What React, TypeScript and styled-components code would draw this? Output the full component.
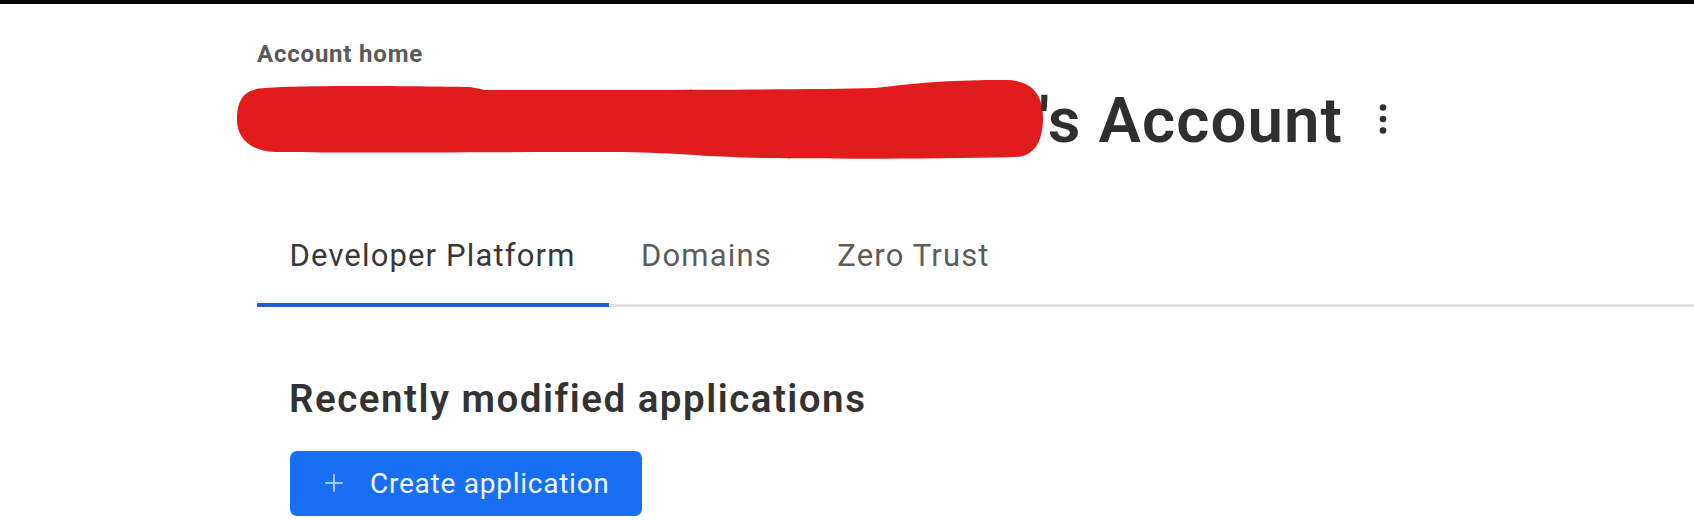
import React from "react";
import styled, { createGlobalStyle } from "styled-components";

const GlobalStyle = createGlobalStyle`
  html, body {
    margin: 0;
    padding: 0;
    background: #ffffff;
  }
  body {
    font-family: Roboto, "Liberation Sans", Arial, sans-serif;
    color: #333333;
  }
`;

const Page = styled.div`
  width: 1694px;
  min-height: 520px;
  overflow: hidden;
  background: #ffffff;
`;

const TopBar = styled.div`
  height: 4px;
  background: #040404;
`;

const Main = styled.main`
  padding-left: 257px;
  display: flex;
  flex-direction: column;
`;

const Breadcrumb = styled.a`
  margin-top: 36px;
  font-size: 24px;
  line-height: 28px;
  font-weight: 700;
  letter-spacing: 0.8px;
  color: #5a5a5a;
  text-decoration: none;
  align-self: flex-start;
`;

const TitleRow = styled.div`
  margin-top: 10px;
  display: flex;
  align-items: center;
  height: 82px;
`;

const Redaction = styled.svg`
  flex: none;
  margin-left: -22px;
  width: 810px;
  height: 82px;
  display: block;
`;

const Title = styled.h1`
  margin: 0;
  margin-left: -6px;
  align-self: flex-start;
  margin-top: 4.6px;
  font-size: 63.5px;
  line-height: 76px;
  font-weight: 600;
  letter-spacing: 1.1px;
  color: #2f2f2f;
  white-space: nowrap;
`;

const KebabButton = styled.button`
  margin-left: 35px;
  padding: 0;
  border: 0;
  background: none;
  display: flex;
  align-items: center;
  justify-content: center;
  width: 10px;
  height: 36px;
  cursor: pointer;
`;

const TabBar = styled.nav`
  margin-top: 78px;
  display: flex;
  border-bottom: 3px solid #e2e2e2;
`;

const Tab = styled.div<{ $active?: boolean }>`
  padding: 0 33px 28.6px 32.5px;
  margin-bottom: -3px;
  font-size: 31px;
  line-height: 36px;
  font-weight: 400;
  letter-spacing: 1.15px;
  color: ${(p) => (p.$active ? "#383838" : "#5c5c5c")};
  border-bottom: 4px solid ${(p) => (p.$active ? "#1c5fcf" : "transparent")};
  white-space: nowrap;
`;

const Section = styled.section`
  padding-left: 32px;
  display: flex;
  flex-direction: column;
  align-items: flex-start;
`;

const SectionHeading = styled.h2`
  margin: 70px 0 0;
  font-size: 38.5px;
  line-height: 44px;
  font-weight: 600;
  letter-spacing: 1.5px;
  color: #333333;
`;

const PrimaryButton = styled.button`
  margin-top: 30px;
  margin-left: 1px;
  width: 352px;
  height: 65px;
  border: 0;
  border-radius: 7px;
  background: #186ef5;
  color: #f3f7ff;
  display: flex;
  align-items: center;
  padding: 0 0 0 35px;
  gap: 27px;
  font-family: Roboto, "Liberation Sans", Arial, sans-serif;
  font-size: 28px;
  font-weight: 400;
  letter-spacing: 0.75px;
  cursor: pointer;
`;

const PlusIcon = () => (
  <svg width="18" height="18" viewBox="0 0 18 18" aria-hidden>
    <path d="M9 1V17M1 9H17" stroke="#a9c9fb" strokeWidth="2" strokeLinecap="round" />
  </svg>
);

const KebabIcon = () => (
  <svg width="10" height="36" viewBox="0 0 10 36" aria-hidden>
    <circle cx="5" cy="6.5" r="3.3" fill="#2f2f2f" />
    <circle cx="5" cy="18" r="3.3" fill="#2f2f2f" />
    <circle cx="5" cy="29.5" r="3.3" fill="#2f2f2f" />
  </svg>
);

export default function App() {
  return (
    <Page>
      <GlobalStyle />
      <TopBar />
      <Main>
        <Breadcrumb href="#">Account home</Breadcrumb>
        <TitleRow>
          <Redaction viewBox="0 0 810 82" aria-hidden>
            <path
              d="M30 10 C70 7 180 8 235 9 L250 12 C400 12 560 12 640 10 C690 4 720 2 770 2 C800 2 808 20 808 40 C808 62 800 79 780 79 C700 81 600 81 530 80 C470 79 430 74 380 74 C250 74 100 75 40 74 C15 73 2 60 2 42 C2 20 10 11 30 10 Z"
              fill="#e21c1c"
            />
          </Redaction>
          <Title>'s Account</Title>
          <KebabButton aria-label="More options">
            <KebabIcon />
          </KebabButton>
        </TitleRow>
        <TabBar>
          <Tab $active>Developer Platform</Tab>
          <Tab>Domains</Tab>
          <Tab>Zero Trust</Tab>
        </TabBar>
        <Section>
          <SectionHeading>Recently modified applications</SectionHeading>
          <PrimaryButton>
            <PlusIcon />
            <span>Create application</span>
          </PrimaryButton>
        </Section>
      </Main>
    </Page>
  );
}
